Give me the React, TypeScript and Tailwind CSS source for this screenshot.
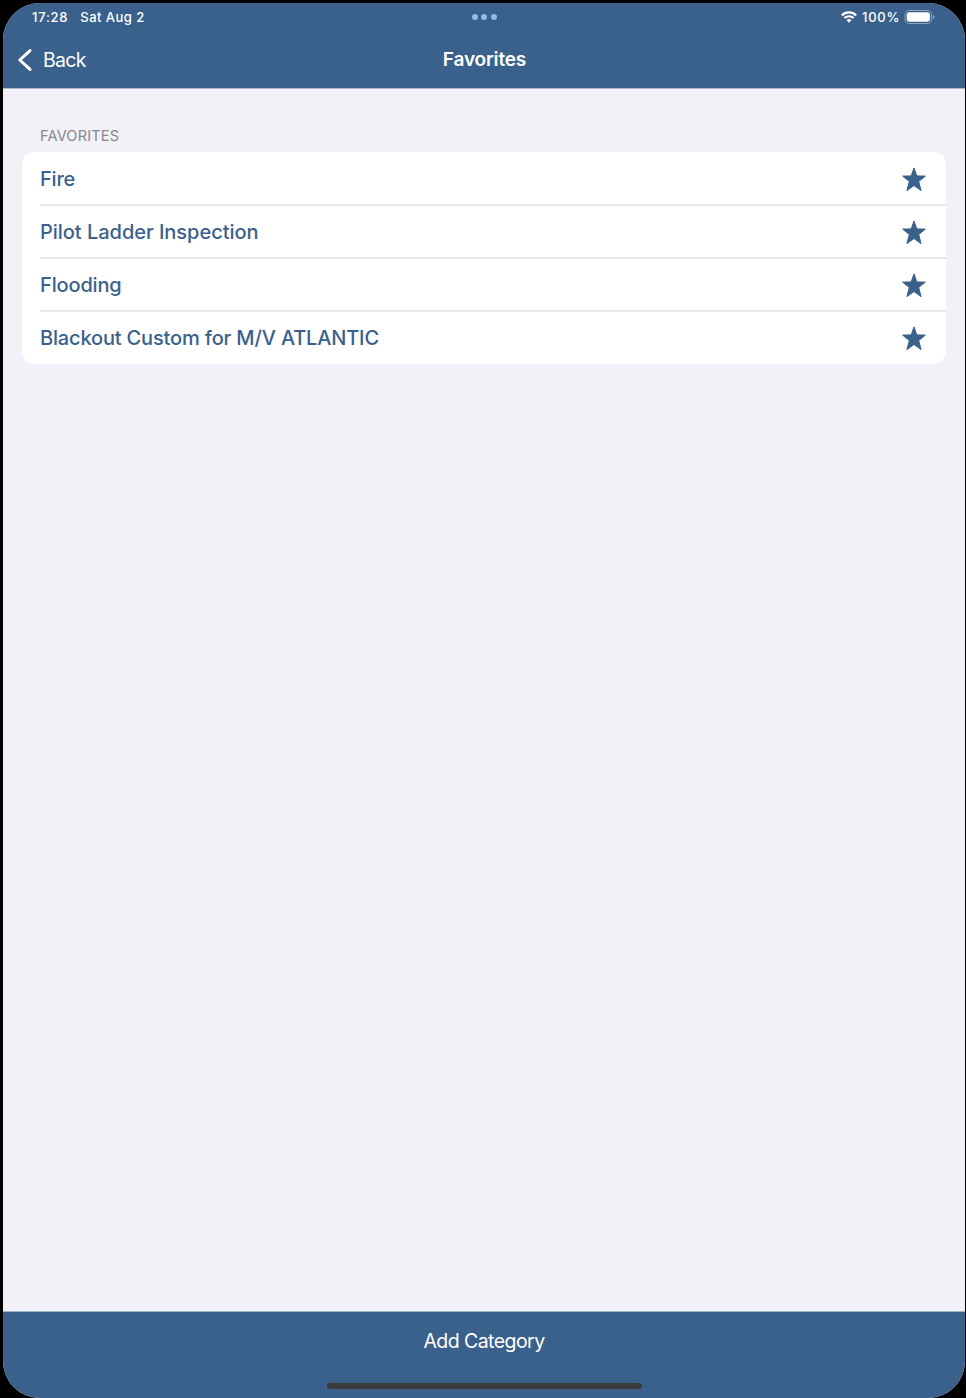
const favorites = [
  { name: 'Fire', tracking: 'tracking-[-0.2px]' },
  { name: 'Pilot Ladder Inspection', tracking: 'tracking-[-0.03px]' },
  { name: 'Flooding', tracking: 'tracking-[-0.15px]' },
  { name: 'Blackout Custom for M/V ATLANTIC', tracking: 'tracking-[-0.16px]' },
];

function Star() {
  return (
    <svg className="h-[25px] w-6 shrink-0" viewBox="0 0 24 25" fill="#3a618c" stroke="#3a618c" strokeWidth="1" strokeLinejoin="round">
      <path d="M12 0.9 L14.8 8.9 L23.4 9.1 L16.7 14.5 L19.1 23.6 L12 18.6 L4.9 23.6 L7.3 14.5 L0.6 9.1 L9.2 8.9 Z" />
    </svg>
  );
}

function Wifi() {
  return (
    <svg className="h-[12px] w-[16px]" viewBox="0 0 16 12" fill="none" stroke="#fff" strokeWidth="2.1">
      <path d="M0.8 4.4 A10.2 10.2 0 0 1 15.2 4.4" />
      <path d="M3.4 7.1 A6.5 6.5 0 0 1 12.6 7.1" />
      <path d="M8 11.7 L5.6 9.3 A3.4 3.4 0 0 1 10.4 9.3 Z" fill="#fff" stroke="none" />
    </svg>
  );
}

function Battery() {
  return (
    <svg className="h-[14px] w-[31px]" viewBox="0 0 31 14">
      <rect x="1" y="0.5" width="26.5" height="13" rx="4.2" fill="none" stroke="#fff" strokeOpacity="0.42" />
      <rect x="2.7" y="2.2" width="23.2" height="9.6" rx="2.8" fill="#fff" />
      <path d="M28.9 4.8 Q30.4 5.5 30.4 7 Q30.4 8.5 28.9 9.2 Z" fill="#fff" fillOpacity="0.45" />
    </svg>
  );
}

export default function App() {
  return (
    <div className="h-[1398px] w-[966px] bg-black pt-[3px] pr-px pl-[3px] font-['Inter',sans-serif]">
      <div className="flex h-[1395px] flex-col overflow-hidden rounded-[37px] bg-[#f2f1f7]">
        <header className="h-[86px] shrink-0 border-b border-[#a9bacb] bg-[#3a618c] text-white">
          <div className="grid h-[28px] grid-cols-3 items-center pr-[30px] pl-[29px] text-[13px] leading-[28px] font-medium">
            <div className="flex gap-[12px]">
              <span className="tracking-[0.75px]">17:28</span>
              <span className="tracking-[0.47px]">Sat Aug 2</span>
            </div>
            <div className="flex justify-center gap-[3.5px] pl-px">
              <i className="size-[6px] rounded-full bg-[#8fbbe9]" />
              <i className="size-[6px] rounded-full bg-[#8fbbe9]" />
              <i className="size-[6px] rounded-full bg-[#8fbbe9]" />
            </div>
            <div className="flex items-center justify-end">
              <Wifi />
              <span className="ml-[5px] tracking-[0.7px]">100%</span>
              <span className="ml-[4px]"><Battery /></span>
            </div>
          </div>
          <div className="grid h-[57px] grid-cols-3 items-center px-[15px] text-[20px]">
            <div className="flex items-center">
              <svg className="h-[22px] w-[14px]" viewBox="0 0 14 22" fill="none" stroke="#fff" strokeWidth="3" strokeLinecap="round" strokeLinejoin="round">
                <path d="M12 1.6 L1.8 11 L12 20.4" />
              </svg>
              <span className="ml-[11px] pt-[2px] text-[19.5px] tracking-[-0.7px]">Back</span>
            </div>
            <h1 className="pt-[2px] pl-px text-center text-[19px] font-semibold tracking-[-0.15px]">Favorites</h1>
          </div>
        </header>
        <main className="flex-1 px-[19px] pt-[36px]">
          <h2 className="h-[27px] pl-[18px] text-[14.5px] leading-[21.5px] tracking-[0.2px] text-[#88878d]">FAVORITES</h2>
          <ul className="rounded-[12px] bg-white pt-px pl-[18px]">
            {favorites.map(({ name, tracking }) => (
              <li key={name} className="flex h-[53px] items-center justify-between border-b-2 border-[#e9e9eb] pt-px pr-[20px] last:h-[52px] last:border-b-0 last:pt-0">
                <span className={`text-[20px] font-medium text-[#3a618c] ${tracking}`}>{name}</span>
                <Star />
              </li>
            ))}
          </ul>
        </main>
        <footer className="flex h-[87px] shrink-0 flex-col items-center border-t border-[#a0b3c6] bg-[#3a618c]">
          <button className="h-[59px] text-[19.5px] tracking-[-0.56px] text-white">Add Category</button>
          <div className="mt-[12px] h-[6px] w-[315px] rounded-full bg-[#3a3a3a]" />
        </footer>
      </div>
    </div>
  );
}
